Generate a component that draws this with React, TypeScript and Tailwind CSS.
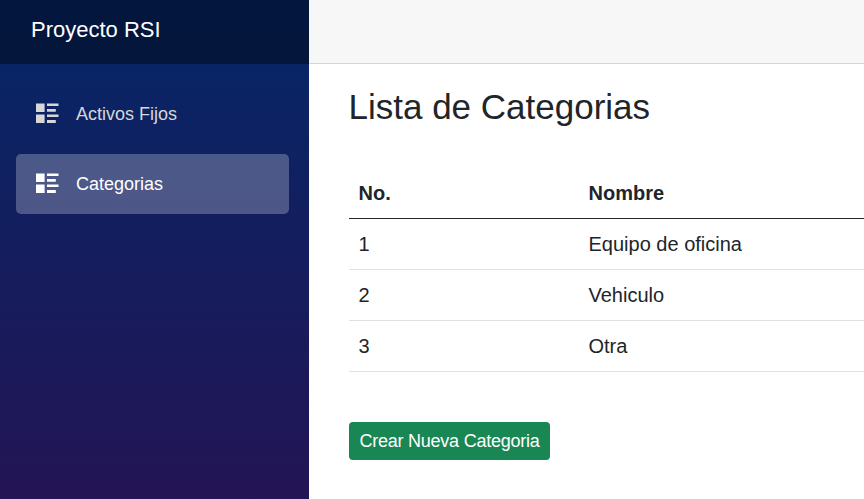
const navItems = [
  { label: "Activos Fijos", active: false },
  { label: "Categorias", active: true },
];

const categories = ["Equipo de oficina", "Vehiculo", "Otra"];

function ListRichIcon() {
  return (
    <svg viewBox="0 0 23 22" className="h-[22px] w-[23px] shrink-0 fill-current" aria-hidden="true">
      <path d="M0 .5h8.6V9H0zM0 11.5h8.6V20H0zM11 .5h11.5V3H11zM11 6h8.8v2.8H11zM11 11.5h11.5V14H11zM11 17h8.8v3H11z" />
    </svg>
  );
}

export default function App() {
  return (
    <div className="flex h-screen w-full overflow-hidden bg-white font-['Liberation_Sans',Arial,sans-serif] text-[#212529]">
      <aside className="flex w-[309px] shrink-0 flex-col bg-[linear-gradient(180deg,#052767_0px,#3a0647_875px)]">
        <div className="flex h-16 items-center bg-black/40 pb-[5px] pl-[31px] text-[22px] text-white">Proyecto RSI</div>
        <nav className="flex flex-col gap-[10px] pt-5 pr-5 pl-4">
          {navItems.map((item) => (
            <a
              key={item.label}
              className={
                item.active
                  ? "flex h-[60px] items-center gap-[17px] rounded-[5px] bg-white/25 pl-5 text-[18px] text-white"
                  : "flex h-[60px] items-center gap-[17px] rounded-[5px] pl-5 text-[18px] text-[#d7d7d7]"
              }
            >
              <ListRichIcon />
              {item.label}
            </a>
          ))}
        </nav>
      </aside>
      <main className="min-w-0 flex-1">
        <div className="h-16 border-b border-[#d6d5d5] bg-[#f7f7f7]" />
        <div className="pl-10">
          <h1 className="-ml-[0.5px] pt-[22px] text-[35px] leading-[42px]">Lista de Categorias</h1>
          <table className="mt-10 w-full table-fixed border-collapse text-left text-[20px] leading-[30px]">
            <thead>
              <tr className="h-[50px] border-b border-[#212529]">
                <th className="w-[230px] pt-px pl-[9.5px]">No.</th>
                <th className="pt-px pl-[9.5px]">Nombre</th>
              </tr>
            </thead>
            <tbody>
              {categories.map((name, index) => (
                <tr key={name} className="h-[51px] border-b border-[#dee2e6]">
                  <td className="pl-[9.5px]">{index + 1}</td>
                  <td className="pl-[9.5px]">{name}</td>
                </tr>
              ))}
            </tbody>
          </table>
          <button className="mt-[50px] h-[38px] w-[201px] rounded-[4px] bg-[#198754] pt-0.5 text-[18px] tracking-[-0.24px] text-white">
            Crear Nueva Categoria
          </button>
        </div>
      </main>
    </div>
  );
}
